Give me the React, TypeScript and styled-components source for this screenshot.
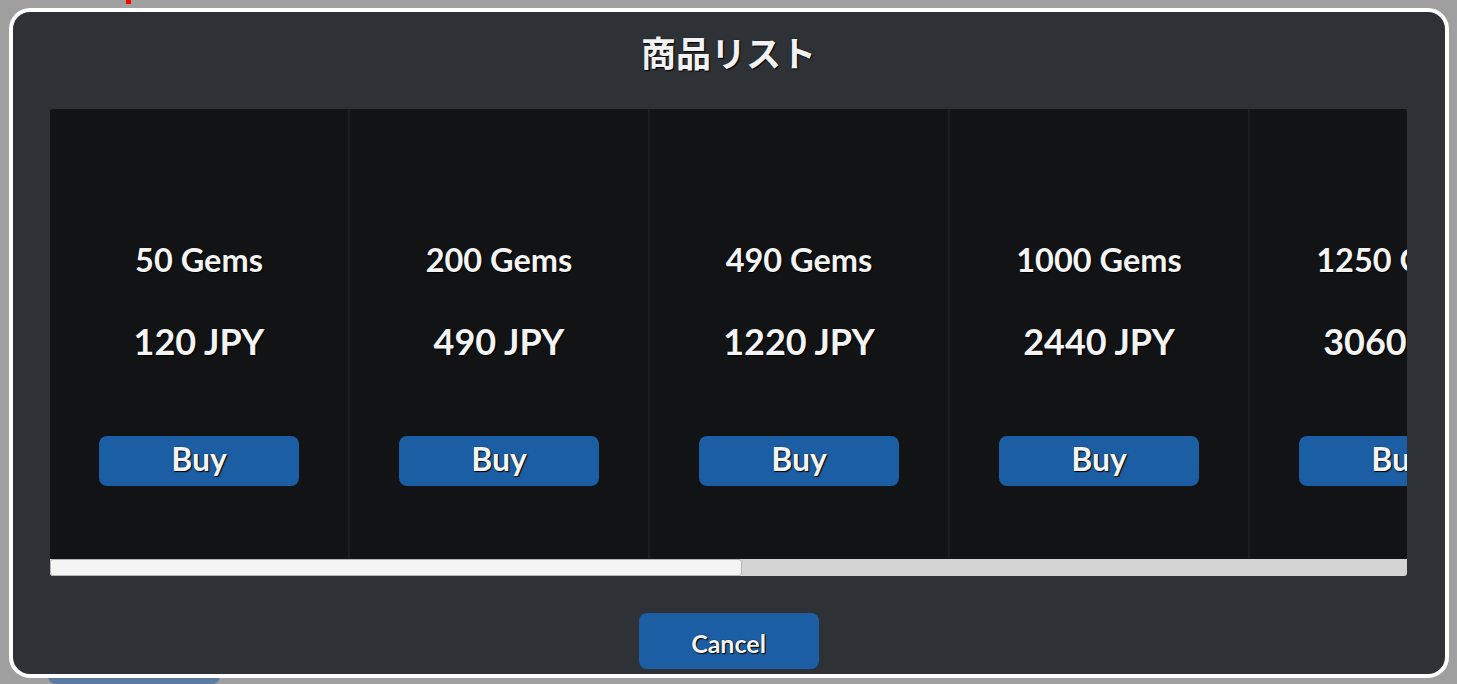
import React from "react";
import styled, { createGlobalStyle } from "styled-components";

const GlobalStyle = createGlobalStyle`
  html, body {
    margin: 0;
    padding: 0;
    background: #9f9f9f;
    overflow: hidden;
  }
  #root {
    position: relative;
    width: 1457px;
    height: 684px;
  }
`;

const Stage = styled.div`
  position: relative;
  width: 1457px;
  height: 684px;
  padding: 8px 0 0 9px;
  box-sizing: border-box;
`;

const Marker = styled.div`
  position: absolute;
  left: 126px;
  top: 0;
  width: 5px;
  height: 4px;
  background: #ff0000;
`;

const BackButton = styled.div`
  position: absolute;
  left: 48px;
  top: 640px;
  width: 172px;
  height: 44px;
  border-radius: 8px;
  background: #5b7ba1;
  z-index: 0;
`;

const Panel = styled.div`
  position: relative;
  z-index: 1;
  box-sizing: border-box;
  width: 1440px;
  height: 670px;
  border: 4px solid #ffffff;
  border-radius: 21px;
  background: #2e3236;
  display: flex;
  flex-direction: column;
  align-items: stretch;
  padding: 0 38px 0 37px;
`;

const Title = styled.h1`
  margin: 0 0 17px;
  height: 80px;
  line-height: 80px;
  text-align: center;
  font-family: "Noto Sans CJK JP", "Noto Sans", sans-serif;
  font-weight: 700;
  font-size: 35px;
  color: #f2f2f2;
  text-shadow: 1px 1px 1px #000, 0 0 1px #000;
`;

const Shelf = styled.div`
  display: flex;
  flex-direction: column;
  height: 467px;
`;

const Viewport = styled.div`
  height: 450px;
  overflow: hidden;
  background: #121315;
  border-radius: 3px 3px 0 0;
`;

const Track = styled.div`
  display: flex;
  height: 450px;
  width: max-content;
`;

const ScrollBar = styled.div`
  position: relative;
  height: 17px;
  background: #d4d4d4;
  border-radius: 0 0 3px 3px;
  display: flex;
`;

const Thumb = styled.div`
  box-sizing: border-box;
  height: 17px;
  background: #f4f4f4;
  border: 1px solid #b4b4b4;
  border-radius: 3px;
`;

const Card = styled.div`
  box-sizing: border-box;
  width: 300px;
  height: 450px;
  flex: none;
  border-right: 2px solid #1b1e21;
  display: flex;
  flex-direction: column;
  align-items: center;
  padding-top: 131px;
  font-family: Lato, "Noto Sans", sans-serif;
  font-weight: 700;
  color: #f4f4f4;
  text-shadow: 1px 1px 1px #000, 0 0 1px #000;
`;

const Amount = styled.div`
  height: 40px;
  line-height: 40px;
  font-size: 32.5px;
  white-space: nowrap;
`;

const Price = styled.div`
  margin-top: 39px;
  height: 44px;
  line-height: 44px;
  font-size: 36px;
  white-space: nowrap;
`;

const BlueButton = styled.button<{ $w: number; $h: number; $size: number; $shift: number }>`
  box-sizing: border-box;
  width: ${(p) => p.$w}px;
  height: ${(p) => p.$h}px;
  border: none;
  border-radius: 8px;
  background: #1b5ea4;
  color: #f4f4f4;
  font-family: Lato, "Noto Sans", sans-serif;
  font-weight: 700;
  font-size: ${(p) => p.$size}px;
  line-height: 1;
  padding: ${(p) => (p.$shift < 0 ? `0 0 ${-p.$shift * 2}px` : `${p.$shift * 2}px 0 0`)};
  text-shadow: 1px 1px 1px #000, 0 0 1px #000;
  cursor: pointer;
  flex: none;
`;

const BuyWrap = styled.div`
  margin-top: 73px;
`;

const Footer = styled.div`
  display: flex;
  justify-content: center;
  margin-top: 37px;
`;

const products = [
  { gems: 50, jpy: 120 },
  { gems: 200, jpy: 490 },
  { gems: 490, jpy: 1220 },
  { gems: 1000, jpy: 2440 },
  { gems: 1250, jpy: 3060 },
  { gems: 2500, jpy: 6100 },
  { gems: 5000, jpy: 12200 },
  { gems: 10000, jpy: 24400 },
  { gems: 20000, jpy: 48800 },
];

const VIEW = 1357;
const CONTENT = 2661;

export default function App() {
  const thumbWidth = Math.round((VIEW * VIEW) / CONTENT);
  return (
    <>
      <GlobalStyle />
      <Stage>
        <Marker />
        <BackButton />
        <Panel>
          <Title>商品リスト</Title>
          <Shelf>
            <Viewport>
              <Track>
                {products.map((p) => (
                  <Card key={p.gems}>
                    <Amount>{p.gems} Gems</Amount>
                    <Price>{p.jpy} JPY</Price>
                    <BuyWrap>
                      <BlueButton $w={200} $h={50} $size={32} $shift={-2.5}>
                        Buy
                      </BlueButton>
                    </BuyWrap>
                  </Card>
                ))}
              </Track>
            </Viewport>
            <ScrollBar>
              <Thumb style={{ width: thumbWidth }} />
            </ScrollBar>
          </Shelf>
          <Footer>
            <BlueButton $w={180} $h={56} $size={25} $shift={2}>
              Cancel
            </BlueButton>
          </Footer>
        </Panel>
      </Stage>
    </>
  );
}
